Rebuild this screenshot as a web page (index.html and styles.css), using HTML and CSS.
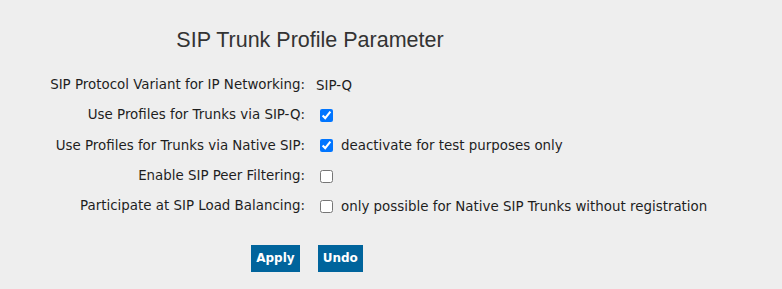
FILE: index.html
```html
<!DOCTYPE html>
<html lang="en">
<head>
    <meta charset="UTF-8">
    <title>SIP Trunk Profile Parameter</title>
    <link rel="stylesheet" href="styles.css">
</head>
<body>
    <div class="page">
        <div class="title">SIP Trunk Profile Parameter</div>
        <div class="form">
            <div class="label">SIP Protocol Variant for IP Networking:</div>
            <div class="value">SIP-Q</div>

            <div class="label">Use Profiles for Trunks via SIP-Q:</div>
            <div class="value"><input type="checkbox" checked></div>

            <div class="label">Use Profiles for Trunks via Native SIP:</div>
            <div class="value"><input type="checkbox" checked><span class="hint">deactivate for test purposes only</span></div>

            <div class="label">Enable SIP Peer Filtering:</div>
            <div class="value"><input type="checkbox"></div>

            <div class="label">Participate at SIP Load Balancing:</div>
            <div class="value"><input type="checkbox"><span class="hint">only possible for Native SIP Trunks without registration</span></div>
        </div>
        <div class="buttons">
            <button class="btn">Apply</button>
            <button class="btn">Undo</button>
        </div>
    </div>
</body>
</html>
```

FILE: styles.css
```css
body {
    margin: 0;
    background-color: #eeeeee;
    font-family: "DejaVu Sans", Verdana, sans-serif;
    font-size: 13.4px;
    color: #1e1e1e;
}
.page {
    width: 614px;
    padding-top: 28px;
}
.title {
    font-family: "Liberation Sans", Arial, sans-serif;
    font-size: 21.5px;
    color: #333333;
    text-align: center;
    margin-left: 6px;
    margin-bottom: 23px;
}
.form {
    display: grid;
    grid-template-columns: 305px auto;
    column-gap: 11px;
    row-gap: 11.75px;
    width: 782px;
}
.label {
    text-align: right;
    height: 18.5px;
    line-height: 18px;
}
.value {
    display: flex;
    align-items: center;
    height: 18.5px;
    white-space: nowrap;
}
.value input {
    margin: 0 3px 0 4px;
    width: 13px;
    height: 13px;
}
.hint {
    margin-left: 5px;
}
.buttons {
    display: flex;
    justify-content: center;
    gap: 18px;
    margin-top: 29px;
}
.btn {
    background-color: #00649c;
    color: white;
    border: none;
    font-family: "DejaVu Sans", Verdana, sans-serif;
    font-weight: bold;
    font-size: 12px;
    height: 27px;
    padding: 0 5px;
    cursor: pointer;
}
```
